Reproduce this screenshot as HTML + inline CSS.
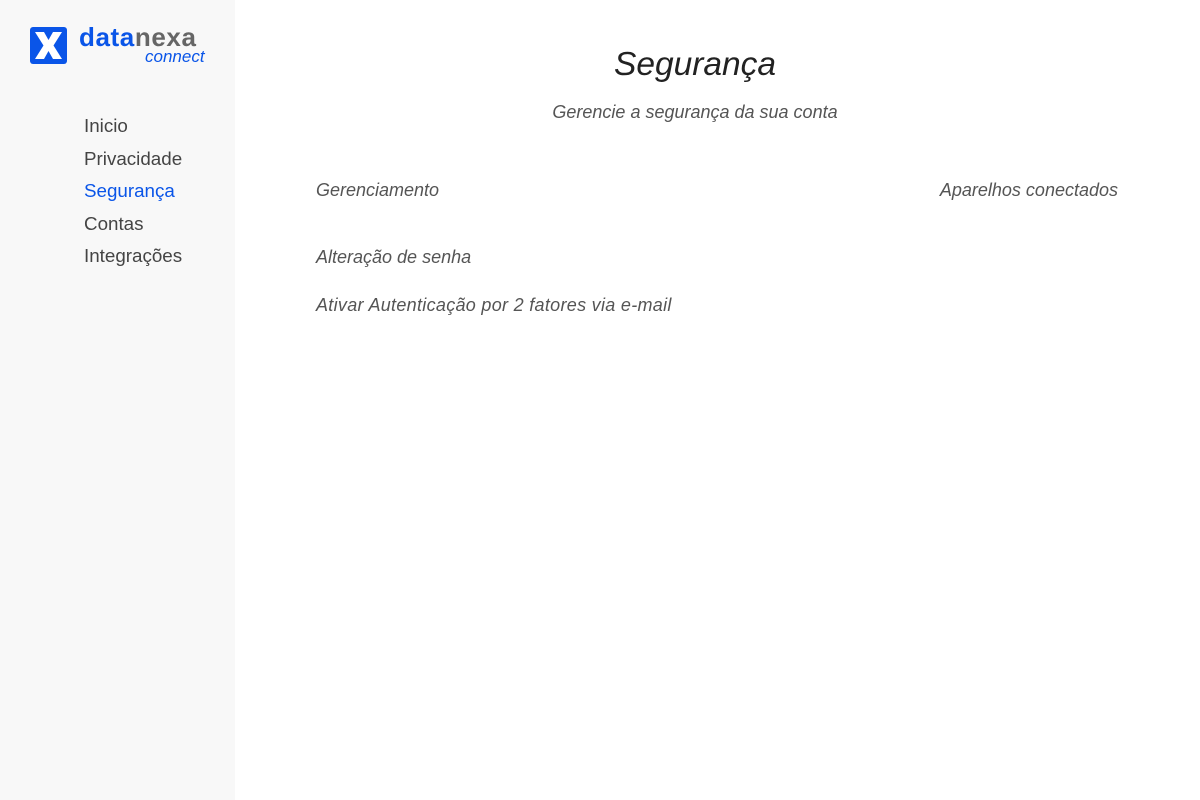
<!DOCTYPE html>
<html><head><meta charset="utf-8"><style>
body{margin:0;width:1200px;height:800px;background:#fff;font-family:"Liberation Sans",sans-serif;position:relative;overflow:hidden}
.side{position:absolute;left:0;top:0;width:235px;height:800px;background:#f8f8f8}
.logo{position:absolute;left:30px;top:27px;width:37px;height:37px;background:#0a55e8;border-radius:3px}
.nav{position:absolute;left:84px;top:110px;font-size:18.8px;color:#444;line-height:32.5px}
.nav .a{color:#0a55e8}
.i{position:absolute;font-style:italic;color:#555;font-size:18px;white-space:nowrap}
</style></head><body>
<div class="side">
<div class="logo"><svg width="37" height="37" viewBox="0 0 37 37"><path d="M5 5 H14 L18.5 13 L23 5 H32 L23.5 18.5 L32 32 H23 L18.5 24 L14 32 H5 L13.5 18.5 Z" fill="#fff"/></svg></div>
<div style="position:absolute;left:79px;top:22px;font-size:26px;font-weight:bold;letter-spacing:0.6px;line-height:30px"><span style="color:#0a55e8">data</span><span style="color:#666">nexa</span></div>
<div style="position:absolute;left:145px;top:47px;font-size:17px;font-style:italic;color:#0a55e8">connect</div>
<div class="nav">Inicio<br>Privacidade<br><span class="a">Segurança</span><br>Contas<br>Integrações</div>
</div>
<div style="position:absolute;left:235px;width:920px;top:46px;text-align:center;font-size:33.5px;font-style:italic;color:#222">Segurança</div>
<div style="position:absolute;left:235px;width:920px;top:102px;text-align:center;font-size:18px;font-style:italic;color:#555">Gerencie a segurança da sua conta</div>
<div class="i" style="left:316px;top:180px">Gerenciamento</div>
<div class="i" style="right:82px;top:180px">Aparelhos conectados</div>
<div class="i" style="left:316px;top:247px">Alteração de senha</div>
<div class="i" style="left:316px;top:295px;letter-spacing:0.3px">Ativar Autenticação por 2 fatores via e-mail</div>
</body></html>
